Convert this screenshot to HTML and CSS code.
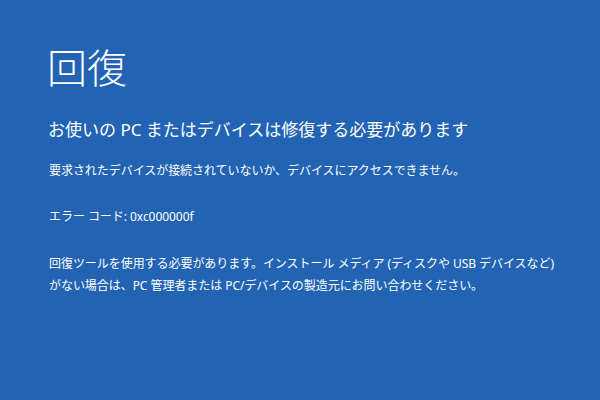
FILE: index.html
```html
<!DOCTYPE html>
<html lang="ja">
<head>
<meta charset="utf-8">
<link rel="stylesheet" href="styles.css">
</head>
<body>
<main class="screen">
  <h1 class="title">回復</h1>
  <p class="subtitle">お使いの PC またはデバイスは修復する必要があります</p>
  <p class="text first">要求されたデバイスが接続されていないか、デバイスにアクセスできません。</p>
  <p class="text code">エラー コード: 0xc000000f</p>
  <p class="text para">回復ツールを使用する必要があります。インストール メディア (ディスクや USB デバイスなど)<br>がない場合は、PC 管理者または PC/デバイスの製造元にお問い合わせください。</p>
</main>
</body>
</html>
```
FILE: styles.css
```css
html, body {
  margin: 0;
  padding: 0;
  width: 600px;
  height: 400px;
  overflow: hidden;
  background: #2264b3;
}
.screen {
  box-sizing: border-box;
  width: 600px;
  height: 400px;
  padding: 44px 0 0 47px;
  color: #ffffff;
  font-family: "Noto Sans", "Noto Sans CJK JP", sans-serif;
}
.title {
  margin: 0;
  font-size: 40px;
  line-height: 48px;
  font-weight: 300;
}
.subtitle {
  margin: 26px 0 0 1px;
  font-size: 17px;
  line-height: 24px;
  font-weight: 400;
}
.text {
  margin: 0 0 0 2px;
  font-size: 12px;
  line-height: 22px;
  letter-spacing: -0.05px;
}
.first { margin-top: 18px; }
.code { margin-top: 24px; }
.para { margin-top: 25px; }
```
